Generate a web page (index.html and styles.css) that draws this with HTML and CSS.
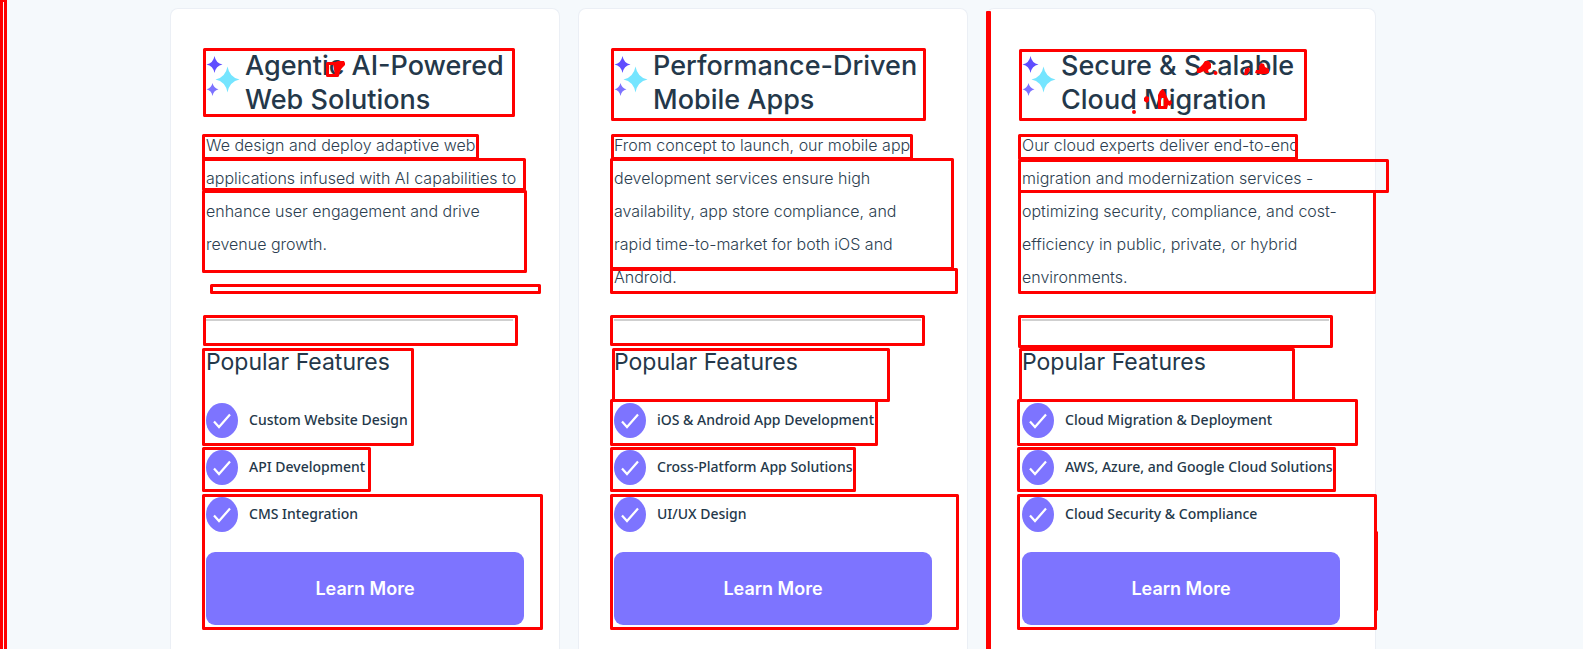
FILE: index.html
```html
<!DOCTYPE html>
<html lang="en">
<head>
<meta charset="utf-8">
<title>Services</title>
<link rel="stylesheet" href="styles.css">
</head>
<body>
<svg class="defs" aria-hidden="true">
  <symbol id="sparkles" viewBox="0 0 34 42">
    <path fill="#5f4dff" d="M8.500 1Q9.800 8.200 16.500 9.500Q9.800 10.800 8.500 18Q7.200 10.800 .5 9.500Q7.200 8.200 8.500 1Z"/>
    <path fill="#75e5ff" d="M21.500 11.500Q23.500 22.500 33.500 24.500Q23.500 26.500 21.500 37.500Q19.500 26.500 9.500 24.500Q19.500 22.500 21.500 11.500Z"/>
    <path fill="#7d73ff" d="M6.500 28Q7.500 33 12.500 34.300Q7.500 35.600 6.500 41Q5.500 35.600 .5 34.300Q5.500 33 6.500 28Z"/>
  </symbol>
  <symbol id="check" viewBox="0 0 32 35">
    <ellipse cx="16" cy="17.500" rx="16" ry="17.500" fill="#7d74ff"/>
    <path d="M8 18.500L13 24L24 11.500" fill="none" stroke="#fff" stroke-width="2.200"/>
  </symbol>
</svg>
<main class="services">
  <article class="card">
    <header class="card-head">
      <svg class="sparkles" aria-hidden="true"><use href="#sparkles"/></svg>
      <h2 class="card-title">Agentic AI-Powered Web Solutions</h2>
    </header>
    <p class="card-text">We design and deploy adaptive web applications infused with AI capabilities to enhance user engagement and drive revenue growth.</p>
    <hr class="rule">
    <h3 class="subhead">Popular Features</h3>
    <ul class="features">
      <li class="feature"><svg class="check" aria-hidden="true"><use href="#check"/></svg><span class="feature-name">Custom Website Design</span></li>
      <li class="feature"><svg class="check" aria-hidden="true"><use href="#check"/></svg><span class="feature-name">API Development</span></li>
      <li class="feature"><svg class="check" aria-hidden="true"><use href="#check"/></svg><span class="feature-name">CMS Integration</span></li>
    </ul>
    <a class="button" href="#web">Learn More</a>
  </article>
  <article class="card">
    <header class="card-head">
      <svg class="sparkles" aria-hidden="true"><use href="#sparkles"/></svg>
      <h2 class="card-title">Performance-Driven Mobile Apps</h2>
    </header>
    <p class="card-text">From concept to launch, our mobile app development services ensure high availability, app store compliance, and rapid time-to-market for both iOS and Android.</p>
    <hr class="rule">
    <h3 class="subhead">Popular Features</h3>
    <ul class="features">
      <li class="feature"><svg class="check" aria-hidden="true"><use href="#check"/></svg><span class="feature-name">iOS &amp; Android App Development</span></li>
      <li class="feature"><svg class="check" aria-hidden="true"><use href="#check"/></svg><span class="feature-name">Cross-Platform App Solutions</span></li>
      <li class="feature"><svg class="check" aria-hidden="true"><use href="#check"/></svg><span class="feature-name">UI/UX Design</span></li>
    </ul>
    <a class="button" href="#mobile">Learn More</a>
  </article>
  <article class="card">
    <header class="card-head">
      <svg class="sparkles" aria-hidden="true"><use href="#sparkles"/></svg>
      <h2 class="card-title">Secure &amp; Scalable Cloud Migration</h2>
    </header>
    <p class="card-text">Our cloud experts deliver end-to-end migration and modernization services - optimizing security, compliance, and cost-efficiency in public, private, or hybrid environments.</p>
    <hr class="rule">
    <h3 class="subhead">Popular Features</h3>
    <ul class="features">
      <li class="feature"><svg class="check" aria-hidden="true"><use href="#check"/></svg><span class="feature-name">Cloud Migration &amp; Deployment</span></li>
      <li class="feature"><svg class="check" aria-hidden="true"><use href="#check"/></svg><span class="feature-name">AWS, Azure, and Google Cloud Solutions</span></li>
      <li class="feature"><svg class="check" aria-hidden="true"><use href="#check"/></svg><span class="feature-name">Cloud Security &amp; Compliance</span></li>
    </ul>
    <a class="button" href="#cloud">Learn More</a>
  </article>
</main>
<svg class="marks" width="1583" height="649" viewBox="0 0 1583 649" aria-hidden="true">
  <path class="mark-fill" d="M0 0H7V649H0Z"/>
  <path fill="#f5f9fc" d="M3 2H4V649H3Z"/>
  <path class="mark-fill" d="M986 12Q986 11 987 11H990Q991 11 991 12V649H986Z"/>
  <g class="mark-line">
    <path d="M204.500 49.500H513.500V115.500H204.500Z"/>
    <path d="M203.500 135.500H477.500V158.500H203.500Z"/>
    <path d="M203.500 159.500H524.500V189.500H203.500Z"/>
    <path d="M203.500 191.500H525.500V271.500H203.500Z"/>
    <path d="M211.500 285.500H539.500V292.500H211.500Z"/>
    <path d="M204.500 316.500H516.500V344.500H204.500Z"/>
    <path d="M203.500 349.500H412.500V444.500H203.500Z"/>
    <path d="M203.500 448.500H369.500V490.500H203.500Z"/>
    <path d="M203.500 495.500H541.500V628.500H203.500Z"/>
    <path d="M327.500 63.500H337.500V75.500H327.500Z"/>
    <path d="M612.500 49.500H924.500V119.500H612.500Z"/>
    <path d="M612.500 135.500H911.500V158.500H612.500Z"/>
    <path d="M611.500 159.500H952.500V268.500H611.500Z"/>
    <path d="M611.500 269.500H956.500V292.500H611.500Z"/>
    <path d="M611.500 316.500H923.500V344.500H611.500Z"/>
    <path d="M613.500 349.500H888.500V400.500H613.500Z"/>
    <path d="M611.500 400.500H876.500V444.500H611.500Z"/>
    <path d="M611.500 448.500H854.500V490.500H611.500Z"/>
    <path d="M611.500 495.500H957.500V628.500H611.500Z"/>
    <path d="M1020.500 50.500H1305.500V119.500H1020.500Z"/>
    <path d="M1019.500 135.500H1296.500V158.500H1019.500Z"/>
    <path d="M1019.500 160.500H1387.500V191.500H1019.500Z"/>
    <path d="M1019.500 191.500H1374.500V292.500H1019.500Z"/>
    <path d="M1019.500 316.500H1331.500V346.500H1019.500Z"/>
    <path d="M1020.500 349.500H1293.500V400.500H1020.500Z"/>
    <path d="M1018.500 400.500H1356.500V444.500H1018.500Z"/>
    <path d="M1018.500 448.500H1334.500V490.500H1018.500Z"/>
    <path d="M1018.500 495.500H1375.500V628.500H1018.500Z"/>
    <path d="M1376.500 531.500V610.500"/>
  </g>
  <g class="mark-fill">
    <path d="M333 63L338 61H344L345 63V65L342 68L340 71L339 76H335Z"/>
    <path d="M1197 69L1200 67L1203 64L1205 61H1209L1211 64V68L1208 70L1209 73L1206 73L1204 71L1200 73H1197Z"/>
    <circle cx="1215.500" cy="73" r="2"/>
    <path d="M1245 69L1249 67L1250 70L1247 75H1244Z"/>
    <path d="M1259 66L1261 63L1264 64L1265 67L1269 69V73L1266 74H1260L1255 73L1256 70H1259Z"/>
    <path d="M1144 98L1146 96L1149 97V101L1147 103L1144 101Z"/>
    <path fill-rule="evenodd" d="M1158 95L1160 91L1163 89L1165 92L1167 97L1169 101L1171 100L1172 103L1170 106L1168 105L1167 109H1158ZM1161 98V106H1164V98Z"/>
    <circle cx="1134" cy="112" r="2"/>
  </g>
</svg>
</body>
</html>
```
FILE: styles.css
```css
* {
  box-sizing: border-box;
}

body {
  margin: 0;
  background: #f5f9fc;
  color: #24384a;
  font-family: Inter, "Liberation Sans", sans-serif;
  position: relative;
  overflow-x: hidden;
}

.defs {
  display: none;
}

.services {
  display: grid;
  grid-template-columns: repeat(3, 1fr);
  gap: 18px;
  min-height: 100vh;
  padding: 8px 207px 0 170px;
}

.card {
  display: flex;
  flex-direction: column;
  padding: 40px 35px 24px;
  background: #fff;
  border: 1px solid #ebeff5;
  border-bottom: 0;
  border-radius: 8px 8px 0 0;
}

.card-head {
  display: flex;
  align-items: flex-start;
  gap: 5px;
}

.sparkles {
  flex: none;
  width: 34px;
  height: 42px;
  margin-top: 6px;
}

.card-title {
  margin: 0;
  font-size: 27px;
  font-weight: 500;
  line-height: 34px;
}

.card-text {
  min-height: 165px;
  margin: 12px 0 25px;
  color: #2c3e50;
  font-size: 16px;
  font-weight: 300;
  line-height: 33px;
}

.rule {
  height: 2px;
  margin: 0 11px 26px 0;
  border: 0;
  background: #cfcfcf;
}

.subhead {
  margin: 0 0 26px;
  font-size: 23px;
  font-weight: 400;
  line-height: 30px;
}

.features {
  display: flex;
  flex-direction: column;
  gap: 12px;
  margin: 0 0 20px;
  padding: 0;
  list-style: none;
}

.feature {
  display: flex;
  align-items: center;
  gap: 11px;
  font-family: "Noto Sans", sans-serif;
  font-size: 14px;
  font-weight: 500;
  line-height: 20px;
}

.feature-name {
  padding-bottom: 2px;
}

.check {
  flex: none;
  width: 32px;
  height: 35px;
}

.button {
  display: block;
  padding: 24px;
  background: #7d74ff;
  border-radius: 9px;
  color: #fff;
  font-size: 18px;
  font-weight: 600;
  line-height: 25px;
  text-align: center;
  text-decoration: none;
}

/* Review marks drawn over the page */
.marks {
  position: absolute;
  top: 0;
  left: 0;
  pointer-events: none;
}

.mark-line {
  fill: none;
  stroke: #f00;
  stroke-width: 3;
  stroke-linejoin: round;
}

.mark-fill {
  fill: #f00;
}
```
